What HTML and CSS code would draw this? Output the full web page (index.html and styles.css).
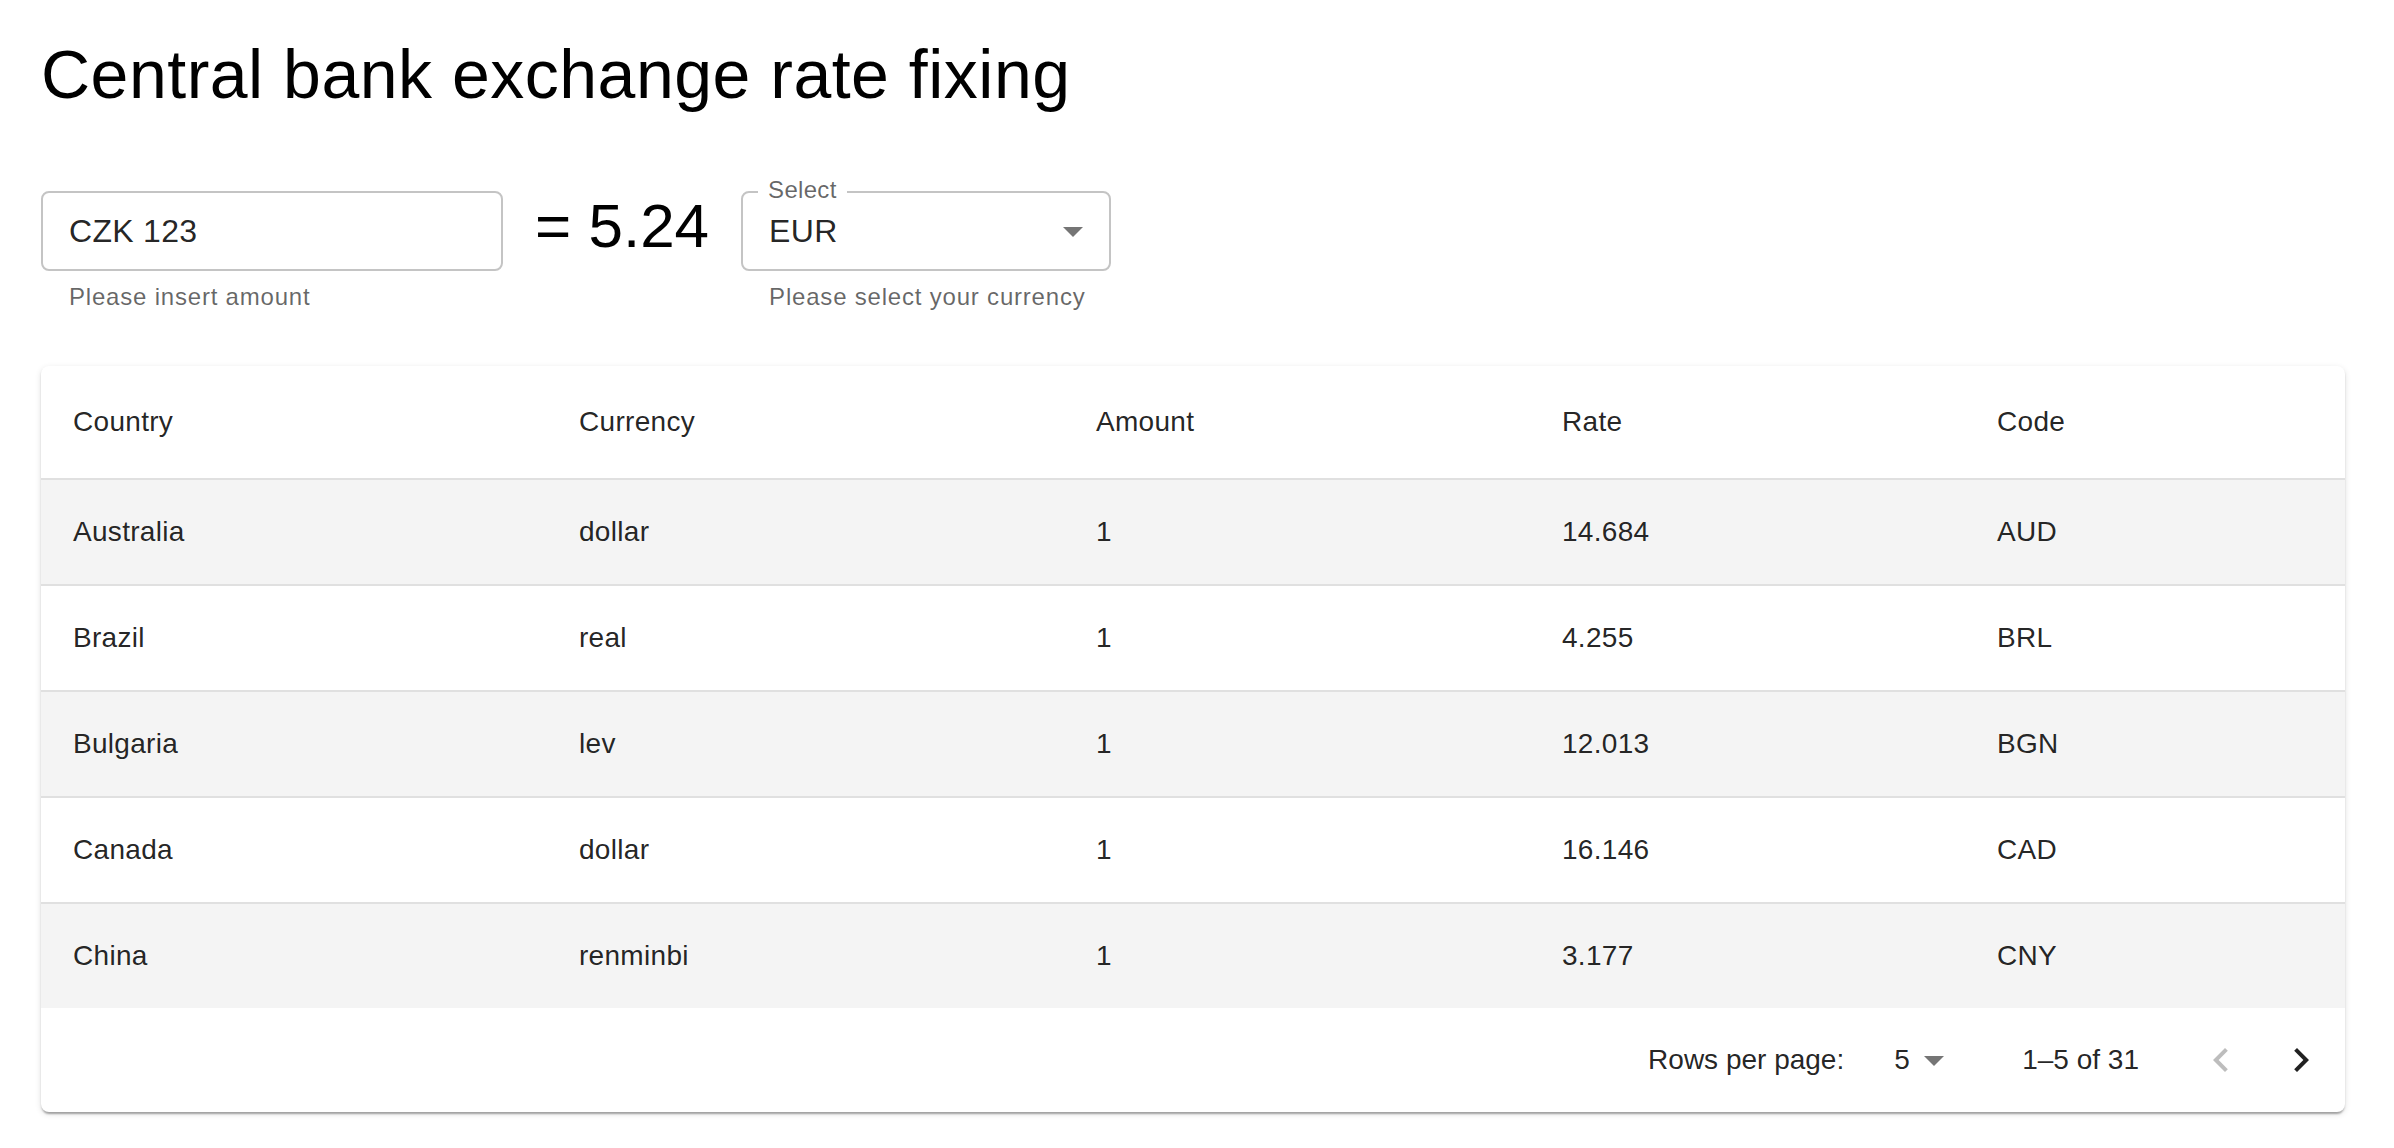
FILE: index.html
```html
<!DOCTYPE html>
<html lang="en">
<head>
<meta charset="utf-8">
<title>Central bank exchange rate fixing</title>
<link rel="stylesheet" href="styles.css">
</head>
<body>
<div class="page">
  <h1 class="title">Central bank exchange rate fixing</h1>

  <div class="form-row">
    <div class="field field-amount">
      <div class="box">
        <span class="box-text">CZK 123</span>
      </div>
      <div class="helper">Please insert amount</div>
    </div>

    <div class="result">= 5.24</div>

    <div class="field field-currency">
      <div class="box box-select">
        <span class="notch-label">Select</span>
        <span class="box-text">EUR</span>
        <svg class="drop-icon" viewBox="0 0 24 24" width="48" height="48"><path d="M7 10l5 5 5-5z"/></svg>
      </div>
      <div class="helper">Please select your currency</div>
    </div>
  </div>

  <div class="card">
    <table class="rates">
      <colgroup>
        <col class="c1"><col class="c2"><col class="c3"><col class="c4"><col class="c5">
      </colgroup>
      <thead>
        <tr><th>Country</th><th>Currency</th><th>Amount</th><th>Rate</th><th>Code</th></tr>
      </thead>
      <tbody>
        <tr><td>Australia</td><td>dollar</td><td>1</td><td>14.684</td><td>AUD</td></tr>
        <tr><td>Brazil</td><td>real</td><td>1</td><td>4.255</td><td>BRL</td></tr>
        <tr><td>Bulgaria</td><td>lev</td><td>1</td><td>12.013</td><td>BGN</td></tr>
        <tr><td>Canada</td><td>dollar</td><td>1</td><td>16.146</td><td>CAD</td></tr>
        <tr><td>China</td><td>renminbi</td><td>1</td><td>3.177</td><td>CNY</td></tr>
      </tbody>
    </table>
    <div class="pager">
      <span class="pager-label">Rows per page:</span>
      <div class="pager-select">
        <span>5</span>
        <svg class="pager-drop" viewBox="0 0 24 24" width="48" height="48"><path d="M7 10l5 5 5-5z"/></svg>
      </div>
      <span class="pager-range">1–5 of 31</span>
      <div class="pager-actions">
        <button class="icon-btn disabled" type="button" aria-label="Previous page">
          <svg viewBox="0 0 24 24" width="48" height="48"><path d="M15.41 16.59 10.83 12l4.58-4.59L14 6l-6 6 6 6z"/></svg>
        </button>
        <button class="icon-btn" type="button" aria-label="Next page">
          <svg viewBox="0 0 24 24" width="48" height="48"><path d="M8.59 16.59 13.17 12 8.59 7.41 10 6l6 6-6 6z"/></svg>
        </button>
      </div>
    </div>
  </div>
</div>
</body>
</html>
```

FILE: styles.css
```css
* { box-sizing: border-box; }

html, body {
  margin: 0;
  padding: 0;
  background: #ffffff;
}

body {
  font-family: "Liberation Sans", Arial, Helvetica, sans-serif;
  color: rgba(0, 0, 0, 0.87);
}

.page {
  padding: 32px 49px 40px 41px;
}

.title {
  margin: 0;
  font-size: 68px;
  line-height: 84px;
  font-weight: 400;
  letter-spacing: 0.5px;
  color: #000;
}

.form-row {
  display: flex;
  align-items: flex-start;
  margin-top: 75px;
}

.field {
  display: flex;
  flex-direction: column;
}

.field-amount { width: 462px; }
.field-currency { width: 370px; }

.box {
  position: relative;
  height: 80px;
  border: 2px solid #c4c4c4;
  border-radius: 8px;
  padding: 0 12px 0 26px;
  display: flex;
  align-items: center;
  justify-content: space-between;
  background: #fff;
}

.box-text {
  font-size: 32px;
  line-height: 46px;
  letter-spacing: 0.3px;
  color: rgba(0, 0, 0, 0.87);
}

.notch-label {
  position: absolute;
  left: 15px;
  top: -17px;
  padding: 0 10px;
  background: #fff;
  font-size: 24px;
  line-height: 28px;
  letter-spacing: 0.3px;
  color: rgba(0, 0, 0, 0.6);
}

.drop-icon {
  fill: rgba(0, 0, 0, 0.54);
  flex: none;
}

.helper {
  margin-top: 6px;
  padding-left: 28px;
  font-size: 24px;
  line-height: 40px;
  color: rgba(0, 0, 0, 0.6);
  letter-spacing: 0.8px;
}

.result {
  margin: 0 32px;
  font-size: 62px;
  line-height: 70px;
  color: #000;
  white-space: nowrap;
}

.card {
  margin-top: 49px;
  background: #fff;
  border-radius: 8px;
  overflow: hidden;
  box-shadow: 0 4px 2px -2px rgba(0, 0, 0, 0.2),
              0 2px 2px 0 rgba(0, 0, 0, 0.14),
              0 2px 6px 0 rgba(0, 0, 0, 0.12);
}

.rates {
  width: 100%;
  border-collapse: collapse;
  table-layout: fixed;
  font-size: 28px;
  letter-spacing: 0.3px;
}

.c1 { width: 506px; }
.c2 { width: 517px; }
.c3 { width: 466px; }
.c4 { width: 435px; }
.c5 { width: 380px; }

.rates th,
.rates td {
  text-align: left;
  padding: 32px 32px;
  border-bottom: 2px solid #e0e0e0;
  color: rgba(0, 0, 0, 0.87);
  font-weight: 400;
  white-space: nowrap;
}

.rates th {
  line-height: 48px;
}

.rates td {
  line-height: 40px;
}

.rates tbody tr:nth-child(odd) td {
  background: #f4f4f4;
}

.rates tbody tr:last-child td {
  border-bottom: 0;
}

.pager {
  height: 104px;
  display: flex;
  align-items: center;
  justify-content: flex-end;
  padding-right: 4px;
  font-size: 28px;
  color: rgba(0, 0, 0, 0.87);
}

.pager-select {
  position: relative;
  display: flex;
  align-items: center;
  width: 80px;
  height: 48px;
  margin-left: 34px;
  margin-right: 64px;
  padding-left: 16px;
}

.pager-drop {
  position: absolute;
  right: 0;
  top: 0;
  fill: rgba(0, 0, 0, 0.54);
}

.pager-actions {
  display: flex;
  margin-left: 42px;
}

.icon-btn {
  width: 80px;
  height: 80px;
  padding: 16px;
  border: 0;
  background: transparent;
  border-radius: 50%;
  display: flex;
  align-items: center;
  justify-content: center;
  fill: rgba(0, 0, 0, 0.87);
  cursor: pointer;
}

.icon-btn.disabled {
  fill: rgba(0, 0, 0, 0.26);
  cursor: default;
}
```
